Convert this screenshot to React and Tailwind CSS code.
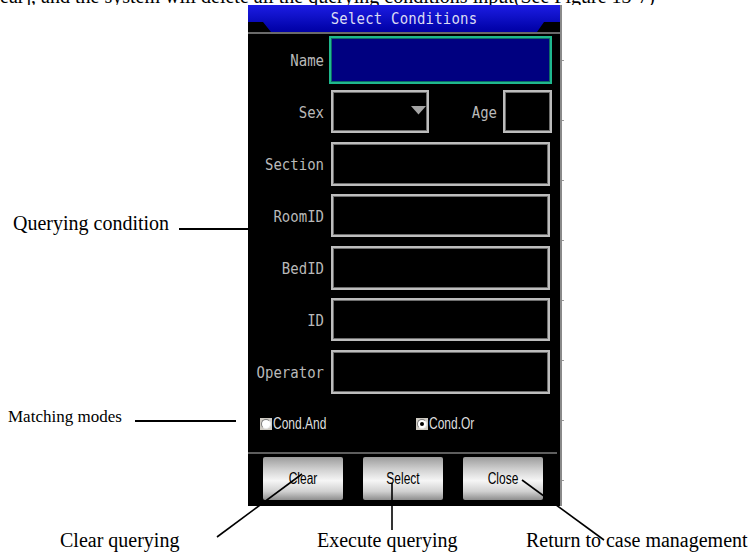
const rows = [
  { label: 'Section', mt: 'mt-[9px]', h: 'h-[44px]' },
  { label: 'RoomID', mt: 'mt-[8px]', h: 'h-[43px]' },
  { label: 'BedID', mt: 'mt-[9px]', h: 'h-[44px]' },
  { label: 'ID', mt: 'mt-[8px]', h: 'h-[43px]' },
  { label: 'Operator', mt: 'mt-[9px]', h: 'h-[44px]' },
]

const ticks = [0, 1, 2, 3, 4, 5, 6, 7]

function Label({ children, className = '' }) {
  return (
    <span className={`font-['DejaVu_Sans_Mono',monospace] text-[14px] leading-[16px] text-[#b9b9b9] inline-block scale-y-[1.15] ${className}`}>
      {children}
    </span>
  )
}

function Field({ className = '' }) {
  return <div className={`border-2 border-[#bdbdbd] shadow-[inset_0_0_0_1px_#6e6e6e] bg-black ${className}`} />
}

function Radio({ checked, label }) {
  return (
    <div className="flex items-center">
      <span className="w-[12px] h-[12px] bg-[#cfcbc3] flex items-center justify-center">
        <span className="w-[10px] h-[10px] rounded-full bg-white border border-[#7c7c7c] border-r-[#e8e8e8] border-b-[#e8e8e8] flex items-center justify-center">
          {checked && <span className="w-[4px] h-[4px] rounded-full bg-black" />}
        </span>
      </span>
      <span className="ml-[1px] font-['Liberation_Sans',sans-serif] text-[12px] leading-[14px] text-[#dedede] inline-block scale-y-[1.3]">{label}</span>
    </div>
  )
}

function Button({ children }) {
  return (
    <div className="w-[80px] h-[43px] rounded-[2px] bg-[linear-gradient(to_bottom,#9c9c9c_0%,#d2d2d2_30%,#f6f6f6_55%,#d0d0d0_80%,#8e8e8e_100%)] flex items-center justify-center">
      <span className="font-['Liberation_Sans',sans-serif] text-[12px] leading-[14px] text-black inline-block scale-y-[1.3]">{children}</span>
    </div>
  )
}

export default function App() {
  return (
    <div className="relative w-[749px] h-[555px] overflow-hidden bg-white text-black font-['Liberation_Serif',serif]">
      <div className="h-[5px] overflow-hidden">
        <p className="-mt-[14px] text-[20px] leading-[20px] whitespace-nowrap">ear], and the system will delete all the querying conditions input(See Figure 13-7)</p>
      </div>

      <div className="flex h-[501px]">
        {/* left annotations */}
        <div className="w-[248px] flex flex-col">
          <div className="mt-[207px] flex items-baseline pl-[13px]">
            <span className="text-[20px] leading-[23px] whitespace-nowrap">Querying condition</span>
            <div className="flex-1 ml-[10px] h-[2px] bg-black" />
          </div>
          <div className="mt-[172px] flex items-baseline pl-[8px]">
            <span className="text-[17px] leading-[19px] whitespace-nowrap">Matching modes</span>
            <div className="ml-[13px] w-[101px] h-[2px] bg-black" />
          </div>
        </div>

        {/* device panel */}
        <div className="w-[314px] bg-black border-r-2 border-[#8a8a8a] flex flex-col">
          <div className="h-[27px] bg-linear-to-b from-[#1c1ce4] to-[#0000a4] flex justify-center [clip-path:polygon(0_0,100%_0,100%_17px,calc(100%_-_16px)_17px,calc(100%_-_23px)_100%,23px_100%,15px_17px,0_17px)]">
            <span className="pt-[4px] font-['DejaVu_Sans_Mono',monospace] text-[14px] leading-[18px] tracking-[0.2px] text-[#dcdcf4] inline-block scale-y-[1.15]">Select Conditions</span>
          </div>
          <div className="h-[2px] bg-[#6a6a6a]" />

          <div className="flex items-center mt-[2px] pr-[8px]">
            <Label className="w-[76px] text-right">Name</Label>
            <div className="ml-[5px] w-[223px] h-[48px] bg-[#000080] border-2 border-[#1fb88e] shadow-[inset_0_0_0_1px_#0d6a66]" />
          </div>

          <div className="flex items-center mt-[6px] pr-[8px]">
            <Label className="w-[76px] text-right">Sex</Label>
            <div className="relative ml-[7px] w-[98px] h-[43px] border-2 border-[#bdbdbd] shadow-[inset_0_0_0_1px_#6e6e6e]">
              <svg className="absolute right-[1px] top-[14px]" width="15" height="9" viewBox="0 0 15 9">
                <path d="M0 0 H15 L7.5 8.5 Z" fill="#a4a4a4" />
              </svg>
            </div>
            <Label className="ml-auto">Age</Label>
            <Field className="ml-[6px] w-[49px] h-[43px]" />
          </div>

          {rows.map(r => (
            <div key={r.label} className={`flex items-center ${r.mt}`}>
              <Label className="w-[76px] text-right">{r.label}</Label>
              <Field className={`ml-[7px] w-[219px] ${r.h}`} />
            </div>
          ))}

          <div className="flex items-center mt-[22px] h-[16px] pl-[12px]">
            <div className="w-[156px]"><Radio label="Cond.And" /></div>
            <Radio checked label="Cond.Or" />
          </div>

          <div className="mt-[20px] mr-[3px] h-[2px] bg-[#5e5e5e]" />

          <div className="flex mt-[3px] pl-[15px] gap-[20px]">
            <Button>Clear</Button>
            <Button>Select</Button>
            <Button>Close</Button>
          </div>
        </div>

        <div className="w-[3px] flex flex-col pt-[55px] gap-[59px]">
          {ticks.map(t => <div key={t} className="w-[2px] h-px bg-[#9a9a9a]" />)}
        </div>
      </div>

      <div className="flex pl-[60px] pt-[23px] text-[20px] leading-[23px] whitespace-nowrap">
        <span className="w-[257px]">Clear querying</span>
        <span className="w-[209px]">Execute querying</span>
        <span>Return to case management</span>
      </div>

      {/* callout lines */}
      <svg className="absolute inset-0 pointer-events-none" width="749" height="555" viewBox="0 0 749 555">
        <line x1="217" y1="537" x2="302" y2="474" stroke="black" strokeWidth="1.6" />
        <line x1="392" y1="483" x2="392" y2="530" stroke="black" strokeWidth="1.6" />
        <line x1="522" y1="480" x2="604" y2="540" stroke="black" strokeWidth="1.6" />
      </svg>
    </div>
  )
}
